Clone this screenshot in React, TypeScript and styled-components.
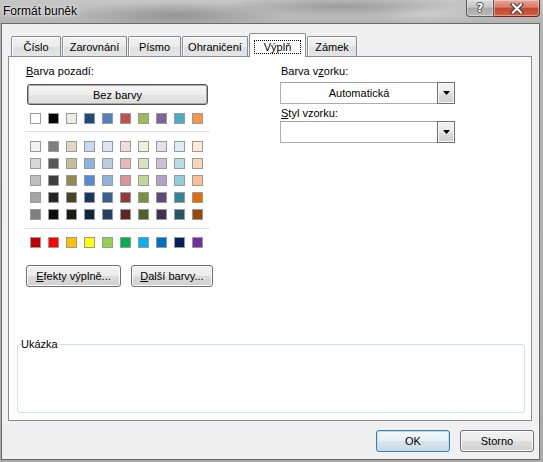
import React from 'react';
import styled, { createGlobalStyle } from 'styled-components';

const FONT = `"Liberation Sans", Arial, sans-serif`;

// Office 2007 theme palette
const THEME_TOP = ['#FFFFFF', '#000000', '#EEECE1', '#1F497D', '#4F81BD', '#C0504D', '#9BBB59', '#8064A2', '#4BACC6', '#F79646'];
const THEME_SHADES = [
  ['#F2F2F2', '#7F7F7F', '#DDD9C3', '#C6D9F0', '#DBE5F1', '#F2DCDB', '#EBF1DD', '#E5E0EC', '#DBEEF3', '#FDEADA'],
  ['#D8D8D8', '#595959', '#C4BD97', '#8DB3E2', '#B8CCE4', '#E5B9B7', '#D7E3BC', '#CCC1D9', '#B7DDE8', '#FBD5B5'],
  ['#BFBFBF', '#3F3F3F', '#938953', '#548DD4', '#95B3D7', '#D99694', '#C3D69B', '#B2A2C7', '#92CDDC', '#FAC08F'],
  ['#A5A5A5', '#262626', '#494429', '#17365D', '#366092', '#953734', '#76923C', '#5F497A', '#31859B', '#E36C09'],
  ['#7F7F7F', '#0C0C0C', '#1D1B10', '#0F243E', '#244061', '#632423', '#4F6128', '#3F3151', '#205867', '#974806'],
];
const STANDARD = ['#C00000', '#FF0000', '#FFC000', '#FFFF00', '#92D050', '#00B050', '#00B0F0', '#0070C0', '#002060', '#7030A0'];

const TABS = [
  { label: 'Číslo', w: 50 },
  { label: 'Zarovnání', w: 65 },
  { label: 'Písmo', w: 53 },
  { label: 'Ohraničení', w: 66 },
  { label: 'Výplň', w: 57, active: true },
  { label: 'Zámek', w: 50 },
];

const GlobalStyle = createGlobalStyle`
  html, body { margin: 0; padding: 0; }
  body {
    width: 543px;
    height: 462px;
    overflow: hidden;
    font-family: ${FONT};
    font-size: 11px;
    color: #000;
  }
  * { box-sizing: border-box; }
`;

/* Aero glass frame (grey tint) */
const Window = styled.div`
  width: 543px;
  height: 462px;
  display: flex;
  flex-direction: column;
  padding: 0 3px 2px 1px;
  background:
    radial-gradient(ellipse 110px 13px at 175px 15px, rgba(80, 80, 80, 0.35), transparent),
    radial-gradient(ellipse 120px 10px at 340px 6px, rgba(70, 70, 70, 0.3), transparent),
    radial-gradient(ellipse 60px 12px at 430px 14px, rgba(255, 255, 255, 0.25), transparent),
    linear-gradient(to bottom, #c6c6c6 0px, #b4b4b4 23px, #aaaaaa 100%);
`;

const TitleBar = styled.div`
  height: 23px;
  flex-shrink: 0;
  display: flex;
  justify-content: space-between;
  align-items: flex-start;
`;

const Title = styled.div`
  padding-left: 2px;
  font-size: 12px;
  line-height: 23px;
  color: #000;
  text-shadow: 0 0 6px rgba(255, 255, 255, 0.9), 0 0 2px rgba(255, 255, 255, 0.8);
`;

const CaptionButtons = styled.div`
  display: flex;
  height: 17px;
`;

const CaptionButton = styled.div<{ $close?: boolean }>`
  width: ${(p) => (p.$close ? 46 : 28)}px;
  height: 17px;
  display: flex;
  align-items: center;
  justify-content: center;
  border: 1px solid ${(p) => (p.$close ? '#6a2c22' : '#5c5c5c')};
  border-top: none;
  border-left: ${(p) => (p.$close ? 'none' : '1px solid #5c5c5c')};
  border-radius: ${(p) => (p.$close ? '0 0 4px 0' : '0 0 0 4px')};
  box-shadow: inset 0 0 0 1px rgba(255, 255, 255, 0.35);
  background: ${(p) =>
    p.$close
      ? 'linear-gradient(to bottom, #e7a698 0%, #d77c69 45%, #c5472f 52%, #d2613f 100%)'
      : 'linear-gradient(to bottom, #dadada 0%, #c6c6c6 45%, #a9a9a9 52%, #b9b9b9 100%)'};
`;

const HelpGlyph = styled.span`
  font-family: "DejaVu Sans", sans-serif;
  font-weight: bold;
  font-size: 12px;
  line-height: 12px;
  color: #fff;
  text-shadow: 0 0 1px #333, 1px 0 0 #555, -1px 0 0 #555, 0 1px 0 #555, 0 -1px 0 #555;
`;

const Client = styled.div`
  flex: 1;
  display: flex;
  flex-direction: column;
  background: #f0f0f0;
  border: 1px solid #6a6a6a;
  padding: 9px 5px 7px 6px;
`;

const TabStrip = styled.div`
  height: 23px;
  display: flex;
  align-items: flex-end;
  gap: 1px;
  padding-left: 3px;
  position: relative;
  z-index: 1;
`;

const Tab = styled.div<{ $w: number; $active?: boolean }>`
  width: ${(p) => p.$w}px;
  height: ${(p) => (p.$active ? 24 : 20)}px;
  margin-bottom: ${(p) => (p.$active ? -1 : 0)}px;
  display: flex;
  align-items: center;
  justify-content: center;
  padding-top: ${(p) => (p.$active ? 2 : 0)}px;
  border: 1px solid #898c95;
  border-bottom: none;
  border-radius: 2px 2px 0 0;
  background: ${(p) =>
    p.$active ? '#fff' : 'linear-gradient(to bottom, #f3f3f3 0%, #ebebeb 50%, #dedede 51%, #e5e5e5 100%)'};
  box-shadow: ${(p) => (p.$active ? 'none' : 'inset 1px 1px 0 #fbfbfb')};
`;

const TabLabel = styled.span<{ $focus?: boolean }>`
  line-height: 12px;
  padding: 0 ${(p) => (p.$focus ? 9 : 0)}px;
  border: 1px dotted ${(p) => (p.$focus ? '#000' : 'transparent')};
`;

const Panel = styled.div`
  height: 365px;
  margin-right: 2px;
  display: flex;
  flex-direction: column;
  background: #fff;
  border: 1px solid #898c95;
  padding: 7px 0 0 0;
`;

const TopArea = styled.div`
  display: flex;
  padding-left: 16px;
`;

const LeftCol = styled.div`
  width: 255px;
  display: flex;
  flex-direction: column;
  align-items: flex-start;
`;

const RightCol = styled.div`
  width: 175px;
  display: flex;
  flex-direction: column;
`;

const Label = styled.div<{ $gap?: number }>`
  line-height: 15px;
  margin-top: ${(p) => p.$gap || 0}px;
  padding-left: 1px;
  u { text-decoration: underline; text-underline-offset: 1px; }
`;

const Button = styled.div<{ $w: number; $h?: number; $default?: boolean }>`
  width: ${(p) => p.$w}px;
  height: ${(p) => p.$h || 22}px;
  display: flex;
  align-items: center;
  justify-content: center;
  border: 1px solid ${(p) => (p.$default ? '#3c7fb1' : '#707070')};
  border-radius: 3px;
  background: ${(p) =>
    p.$default
      ? 'linear-gradient(to bottom, #f2f7fa 0%, #e7eff4 50%, #d7e4ec 51%, #cad9e4 100%)'
      : 'linear-gradient(to bottom, #f2f2f2 0%, #ebebeb 50%, #dddddd 51%, #cfcfcf 100%)'};
  box-shadow: inset 0 0 0 1px ${(p) => (p.$default ? '#b9dcf2' : '#fcfcfc')};
  u { text-decoration: underline; text-underline-offset: 1px; }
`;

const NoColorButton = styled(Button)`
  margin: 5px 0 0 2px;
  border-color: #555;
  box-shadow: inset 0 0 0 1px #a8a8a8;
  background: linear-gradient(to bottom, #f6f6f6 0%, #eeeeee 50%, #e4e4e4 51%, #dedede 100%);
`;

const SwatchGrid = styled.div<{ $top: number }>`
  display: grid;
  grid-template-columns: repeat(10, 11px);
  column-gap: 7px;
  row-gap: 6px;
  margin: ${(p) => p.$top}px 0 0 5px;
`;

const Swatch = styled.span<{ $color: string }>`
  width: 11px;
  height: 11px;
  background: ${(p) => p.$color};
  border: 1px solid #9a9a9a;
`;

const Separator = styled.div<{ $top: number }>`
  width: 185px;
  height: 1px;
  margin-top: ${(p) => p.$top}px;
  background: #e2e2e2;
`;

const ActionRow = styled.div`
  display: flex;
  gap: 10px;
  margin: 17px 0 0 1px;
`;

const Select = styled.div<{ $top: number }>`
  height: 22px;
  margin-top: ${(p) => p.$top}px;
  display: flex;
  background: #fff;
  border: 1px solid #abadb3;
  border-top-color: #a0a3aa;
`;

const SelectValue = styled.div`
  flex: 1;
  display: flex;
  align-items: center;
  justify-content: center;
`;

const SelectArrow = styled.div`
  width: 18px;
  margin: -1px -1px -1px 0;
  display: flex;
  align-items: center;
  justify-content: center;
  border: 1px solid #6f6f6f;
  box-shadow: inset 0 0 0 1px #f7f7f7;
  background: linear-gradient(to bottom, #f2f2f2 0%, #ebebeb 50%, #dddddd 51%, #cfcfcf 100%);
`;

const Sample = styled.fieldset`
  margin: auto 6px 7px 8px;
  height: 76px;
  padding: 0 0 0 3px;
  border: 1px solid #d5dfe5;
  border-radius: 3px;

  legend {
    padding: 0;
    line-height: 15px;
  }
`;

const ButtonRow = styled.div`
  display: flex;
  justify-content: flex-end;
  gap: 10px;
  margin-top: 9px;
`;

const DownArrow = () => (
  <svg width="7" height="4" viewBox="0 0 7 4">
    <path d="M0 0h7l-3.5 4z" fill="#000" />
  </svg>
);

const CloseGlyph = () => (
  <svg width="14" height="11" viewBox="0 0 14 11">
    <path d="M3 1.5L11 9.5M11 1.5L3 9.5" stroke="#3a3a3a" strokeWidth="4.2" strokeLinecap="square" />
    <path d="M3 1.5L11 9.5M11 1.5L3 9.5" stroke="#fff" strokeWidth="2.2" strokeLinecap="square" />
  </svg>
);

export default function App() {
  return (
    <>
      <GlobalStyle />
      <Window>
        <TitleBar>
          <Title>Formát buněk</Title>
          <CaptionButtons>
            <CaptionButton>
              <HelpGlyph>?</HelpGlyph>
            </CaptionButton>
            <CaptionButton $close>
              <CloseGlyph />
            </CaptionButton>
          </CaptionButtons>
        </TitleBar>

        <Client>
          <TabStrip>
            {TABS.map((t) => (
              <Tab key={t.label} $w={t.w} $active={t.active}>
                <TabLabel $focus={t.active}>{t.label}</TabLabel>
              </Tab>
            ))}
          </TabStrip>

          <Panel>
            <TopArea>
              <LeftCol>
                <Label>
                  <u>B</u>arva pozadí:
                </Label>
                <NoColorButton $w={181} $h={21}>Bez barvy</NoColorButton>

                <SwatchGrid $top={8}>
                  {THEME_TOP.map((c) => (
                    <Swatch key={c} $color={c} />
                  ))}
                </SwatchGrid>
                <Separator $top={7} />
                <SwatchGrid $top={9}>
                  {THEME_SHADES.flat().map((c, i) => (
                    <Swatch key={i} $color={c} />
                  ))}
                </SwatchGrid>
                <Separator $top={8} />
                <SwatchGrid $top={8}>
                  {STANDARD.map((c) => (
                    <Swatch key={c} $color={c} />
                  ))}
                </SwatchGrid>

                <ActionRow>
                  <Button $w={95}>
                    <span>
                      <u>E</u>fekty výplně...
                    </span>
                  </Button>
                  <Button $w={82}>
                    <span>
                      <u>D</u>alší barvy...
                    </span>
                  </Button>
                </ActionRow>
              </LeftCol>

              <RightCol>
                <Label>
                  Barva v<u>z</u>orku:
                </Label>
                <Select $top={3}>
                  <SelectValue>Automatická</SelectValue>
                  <SelectArrow>
                    <DownArrow />
                  </SelectArrow>
                </Select>
                <Label $gap={2}>
                  <u>S</u>tyl vzorku:
                </Label>
                <Select $top={0}>
                  <SelectValue />
                  <SelectArrow>
                    <DownArrow />
                  </SelectArrow>
                </Select>
              </RightCol>
            </TopArea>

            <Sample>
              <legend>Ukázka</legend>
            </Sample>
          </Panel>

          <ButtonRow>
            <Button $w={74} $default>OK</Button>
            <Button $w={74}>Storno</Button>
          </ButtonRow>
        </Client>
      </Window>
    </>
  );
}
